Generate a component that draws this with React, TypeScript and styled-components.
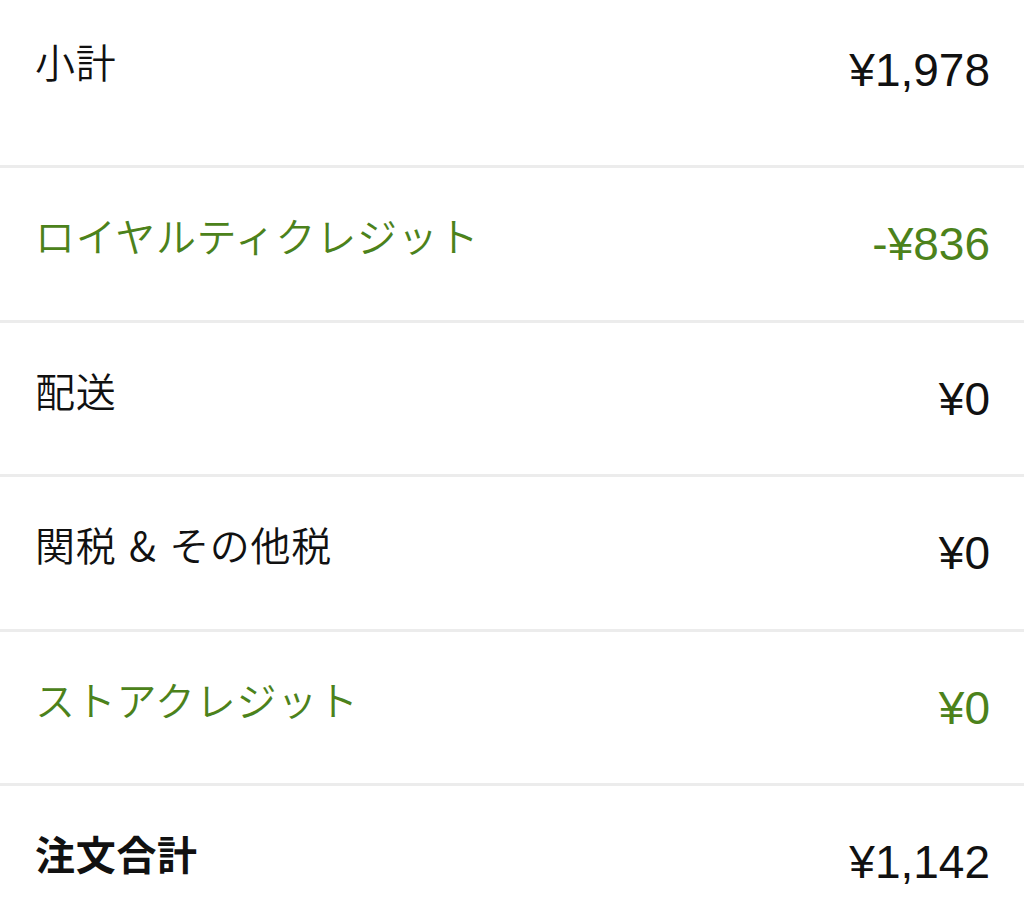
import React from 'react';
import styled, { createGlobalStyle } from 'styled-components';

const GlobalStyle = createGlobalStyle`
  html, body {
    margin: 0;
    padding: 0;
    background: #ffffff;
  }
  body {
    font-family: "Noto Sans CJK JP", "Liberation Sans", sans-serif;
    color: #111111;
  }
`;

const Summary = styled.section`
  width: 1024px;
  display: flex;
  flex-direction: column;
`;

const Row = styled.div<{ $first?: boolean; $last?: boolean }>`
  box-sizing: border-box;
  height: ${(p) => (p.$first ? '168px' : p.$last ? '128px' : '154.5px')};
  padding: ${(p) => (p.$first ? '33px' : '39px')} 34px 0 35px;
  display: flex;
  justify-content: space-between;
  align-items: flex-start;
  border-bottom: ${(p) => (p.$last ? 'none' : '3px solid #ececec')};
`;

const Label = styled.span<{ $green?: boolean; $bold?: boolean }>`
  font-family: "Noto Sans CJK JP", "Liberation Sans", sans-serif;
  font-size: 40px;
  line-height: 56px;
  letter-spacing: 0.7px;
  word-spacing: 3px;
  font-weight: ${(p) => (p.$bold ? 700 : 350)};
  color: ${(p) => (p.$green ? '#4c821b' : '#111111')};
`;

const Value = styled.span<{ $green?: boolean }>`
  font-family: "Liberation Sans", Arial, sans-serif;
  font-size: 46px;
  line-height: 56px;
  margin-top: 9px;
  color: ${(p) => (p.$green ? '#4c821b' : '#111111')};
`;

type Line = {
  label: string;
  value: string;
  green?: boolean;
  bold?: boolean;
};

const lines: Line[] = [
  { label: '小計', value: '¥1,978' },
  { label: 'ロイヤルティクレジット', value: '-¥836', green: true },
  { label: '配送', value: '¥0' },
  { label: '関税 & その他税', value: '¥0' },
  { label: 'ストアクレジット', value: '¥0', green: true },
  { label: '注文合計', value: '¥1,142', bold: true },
];

const App = () => {
  return (
    <>
      <GlobalStyle />
      <Summary>
        {lines.map((line, i) => (
          <Row key={line.label} $first={i === 0} $last={i === lines.length - 1}>
            <Label $green={line.green} $bold={line.bold}>
              {line.label}
            </Label>
            <Value $green={line.green}>{line.value}</Value>
          </Row>
        ))}
      </Summary>
    </>
  );
};

export default App;
